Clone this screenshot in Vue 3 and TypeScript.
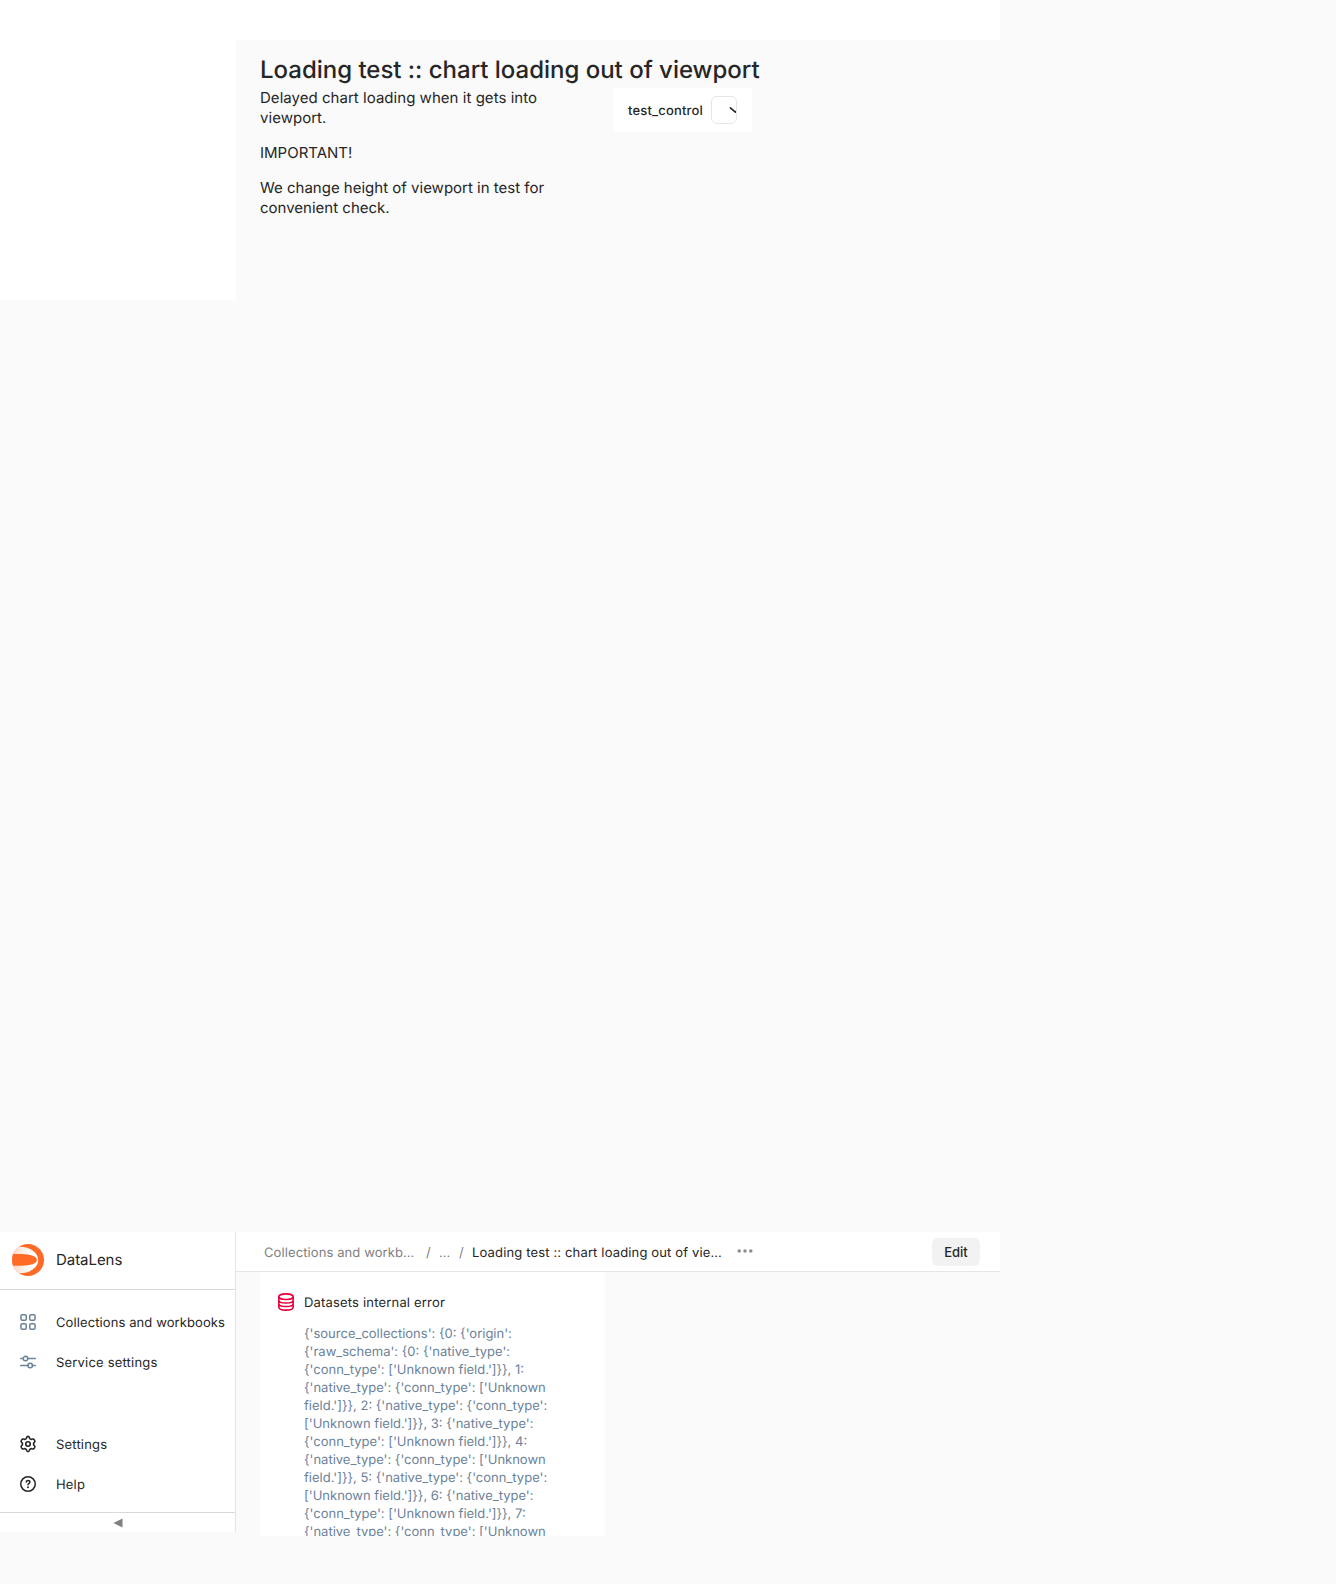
<script setup lang="ts">
const errorLines: string[] = [
  "{'source_collections': {0: {'origin':",
  "{'raw_schema': {0: {'native_type':",
  "{'conn_type': ['Unknown field.']}}, 1:",
  "{'native_type': {'conn_type': ['Unknown",
  "field.']}}, 2: {'native_type': {'conn_type':",
  "['Unknown field.']}}, 3: {'native_type':",
  "{'conn_type': ['Unknown field.']}}, 4:",
  "{'native_type': {'conn_type': ['Unknown",
  "field.']}}, 5: {'native_type': {'conn_type':",
  "['Unknown field.']}}, 6: {'native_type':",
  "{'conn_type': ['Unknown field.']}}, 7:",
  "{'native_type': {'conn_type': ['Unknown",
]
</script>

<template>
  <div class="page">
    <div class="top-strip"></div>
    <div class="upper">
      <div class="aside-blank"></div>
      <div class="dash">
        <h1 class="title">Loading test :: chart loading out of viewport</h1>
        <div class="dash-row">
          <div class="note">
            <p class="lead">Delayed chart loading when it gets into<br />viewport.</p>
            <p>IMPORTANT!</p>
            <p>We change height of viewport in test for<br />convenient check.</p>
          </div>
          <div class="control">
            <span class="control-label">test_control</span>
            <div class="select">
              <svg class="chevron" width="16" height="16" viewBox="0 0 16 16" fill="none" stroke="#262626" stroke-width="1.6" stroke-linecap="round" stroke-linejoin="round"><path d="M3.4 5.8 8.4 10.2l4.7-4.2" /></svg>
            </div>
          </div>
        </div>
      </div>
    </div>

    <div class="shell">
      <aside class="sidebar">
        <div class="brand">
          <svg width="32" height="32" viewBox="0 0 32 32">
            <defs>
              <linearGradient id="lens" x1="0" y1="0" x2="1" y2="0">
                <stop offset="0.3" stop-color="#ffd9c8" />
                <stop offset="0.8" stop-color="#fff" />
              </linearGradient>
              <clipPath id="disc"><circle cx="16" cy="16" r="16" /></clipPath>
            </defs>
            <g clip-path="url(#disc)">
              <rect width="32" height="32" fill="#ff6a26" />
              <ellipse cx="8" cy="16" rx="18.2" ry="13.2" fill="url(#lens)" />
              <path d="M0 10.1H9C19 10.2 24.8 12.4 24.8 16S19 21.6 9 21.7H0Z" fill="#ff6a26" />
            </g>
          </svg>
          <span class="brand-name">DataLens</span>
        </div>
        <nav class="menu">
          <div class="item">
            <svg class="muted" width="16" height="16" viewBox="0 0 16 16"><g fill="none" stroke="currentColor" stroke-width="1.5"><rect x=".95" y=".75" width="5.3" height="5.5" rx="1.25" /><rect x="9.75" y=".75" width="5.3" height="5.5" rx="1.25" /><rect x=".95" y="9.75" width="5.3" height="5.5" rx="1.25" /><rect x="9.75" y="9.75" width="5.3" height="5.5" rx="1.25" /></g></svg>
            <span class="long">Collections and workbooks</span>
          </div>
          <div class="item">
            <svg class="muted" width="16" height="16" viewBox="0 0 16 16"><g fill="none" stroke="currentColor" stroke-width="1.5" stroke-linecap="round"><circle cx="5.5" cy="4.5" r="2.25" /><circle cx="10.2" cy="11.5" r="2.25" /><path d="M.75 4.5h2.5M7.75 4.5h7.5M.75 11.5h7.2M12.5 11.5h2.75" /></g></svg>
            <span>Service settings</span>
          </div>
        </nav>
        <nav class="footer-menu">
          <div class="item">
            <svg width="16" height="16" viewBox="0 0 16 16" overflow="visible"><g fill="none" stroke="currentColor" stroke-width="1.6" stroke-linejoin="round"><path d="M6.55 1.6C6.7 1.05 7 .4 8 .4S9.3 1.05 9.45 1.6L9.7 2.6C10.3 2.9 10.7 3.1 11.2 3.45L12.4 3.1C13.2 2.85 13.9 3.1 14.3 3.8L14.7 4.55C15.1 5.3 14.9 6 14.35 6.5L13.6 7.2V8.8L14.35 9.5C14.9 10 15.1 10.7 14.7 11.45L14.3 12.2C13.9 12.9 13.2 13.15 12.4 12.9L11.2 12.55C10.7 12.9 10.3 13.1 9.7 13.4L9.45 14.4C9.3 14.95 9 15.6 8 15.6S6.7 14.95 6.55 14.4L6.3 13.4C5.7 13.1 5.3 12.9 4.8 12.55L3.6 12.9C2.8 13.15 2.1 12.9 1.7 12.2L1.3 11.45C.9 10.7 1.1 10 1.65 9.5L2.4 8.8V7.2L1.65 6.5C1.1 6 .9 5.3 1.3 4.55L1.7 3.8C2.1 3.1 2.8 2.85 3.6 3.1L4.8 3.45C5.3 3.1 5.7 2.9 6.3 2.6Z" /><circle cx="8" cy="8" r="2.25" /></g></svg>
            <span>Settings</span>
          </div>
          <div class="item">
            <svg width="16" height="16" viewBox="0 0 16 16"><g fill="none" stroke="currentColor" stroke-width="1.5" stroke-linecap="round" stroke-linejoin="round"><circle cx="8" cy="8" r="7.25" /><path d="M6.2 6.1C6.3 5.2 7 4.6 8 4.6c1.1 0 1.9.6 1.9 1.5C9.9 7.4 8 7.4 8 8.8" /></g><circle cx="8" cy="11.2" r=".95" fill="currentColor" /></svg>
            <span>Help</span>
          </div>
        </nav>
        <div class="collapse">
          <svg width="10" height="10" viewBox="0 0 10 10"><path d="M0.4 5 9.5.4v9.2Z" fill="#808080" /></svg>
        </div>
      </aside>

      <main class="main">
        <header class="header">
          <div class="crumbs">
            <span class="crumb first">Collections and workb…</span>
            <span class="crumb sep1">/</span>
            <span class="crumb dots">…</span>
            <span class="crumb sep2">/</span>
            <span class="current">Loading test :: chart loading out of vie…</span>
          </div>
          <svg class="more" width="16" height="16" viewBox="0 0 16 16" fill="#8c8c8c"><circle cx="2.2" cy="8" r="1.75" /><circle cx="8" cy="8" r="1.75" /><circle cx="13.8" cy="8" r="1.75" /></svg>
          <button class="edit">Edit</button>
        </header>
        <section class="card">
          <svg class="db" width="16" height="18" viewBox="0 0 16 18" fill="none" stroke="#e9003a" stroke-width="1.6"><ellipse cx="8" cy="3.7" rx="7.15" ry="2.8" /><path d="M.85 3.7v10.5c0 1.7 3.2 2.9 7.15 2.9s7.15-1.2 7.15-2.9V3.7M.85 7.2c0 1.6 3.2 2.8 7.15 2.8s7.15-1.2 7.15-2.8M.85 10.7c0 1.6 3.2 2.8 7.15 2.8s7.15-1.2 7.15-2.8" /></svg>
          <div class="card-body">
            <div class="card-title">Datasets internal error</div>
            <div class="error">
              <div v-for="(line, i) in errorLines" :key="i">{{ line }}</div>
            </div>
          </div>
        </section>
      </main>
    </div>
  </div>
</template>

<style>
body {
  background: #fafafa;
}
</style>

<style scoped>
.page {
  width: 1336px;
  height: 1584px;
  overflow: hidden;
  box-sizing: border-box;
  background: #fafafa;
  color: #262626;
  font-family: Inter, "Liberation Sans", sans-serif;
  font-size: 13px;
  line-height: 18px;
  text-rendering: geometricPrecision;
  display: flex;
  flex-direction: column;
}
svg {
  display: block;
  flex: none;
}
.top-strip {
  width: 1000px;
  height: 40px;
  flex: none;
  background: #fff;
}
.upper {
  display: flex;
  height: 1192px;
  flex: none;
}
.aside-blank {
  width: 236px;
  height: 260px;
  background: #fff;
}
.dash {
  padding: 16px 24px 0;
  width: 716px;
}
.title {
  margin: 0;
  font-size: 24px;
  line-height: 28px;
  font-weight: 500;
  letter-spacing: -0.015px;
  white-space: nowrap;
}
.dash-row {
  display: flex;
  align-items: flex-start;
  margin-top: 4px;
}
.note {
  width: 353px;
  font-size: 15px;
  line-height: 20px;
  white-space: nowrap;
}
.note p {
  margin: 0 0 15px;
}
.note .lead {
  letter-spacing: 0.035px;
}
.control {
  box-sizing: border-box;
  width: 139px;
  height: 44px;
  border-radius: 3px;
  background: #fff;
  display: flex;
  align-items: center;
  justify-content: space-between;
  padding: 0 15px;
}
.control-label {
  padding-top: 2px;
  font-weight: 500;
  letter-spacing: 0.17px;
}
.select {
  box-sizing: border-box;
  width: 26px;
  height: 28px;
  border: 1px solid #e5e5e5;
  border-radius: 6px;
  overflow: hidden;
  display: flex;
  align-items: center;
  padding-left: 15px;
}
.shell {
  display: flex;
  width: 1000px;
  height: 304px;
  flex: none;
}
.sidebar {
  box-sizing: border-box;
  width: 236px;
  height: 300px;
  background: #fff;
  border-right: 1px solid #e5e5e5;
  display: flex;
  flex-direction: column;
}
.brand {
  box-sizing: border-box;
  height: 58px;
  padding: 0 12px 1px;
  border-bottom: 1px solid #d9d9d9;
  display: flex;
  align-items: center;
  gap: 12px;
  font-size: 15px;
  line-height: 20px;
}
.brand-name {
  letter-spacing: -0.05px;
}
.menu {
  padding-top: 12px;
}
.footer-menu {
  margin-top: auto;
  padding-bottom: 8px;
}
.item {
  height: 40px;
  padding-left: 20px;
  display: flex;
  align-items: center;
  gap: 20px;
  white-space: nowrap;
  letter-spacing: 0.19px;
}
.item span {
  padding-top: 2px;
}
.item .long {
  letter-spacing: 0.1px;
}
.muted {
  color: #6b8299;
}
.collapse {
  height: 19px;
  border-top: 1px solid #d9d9d9;
  display: flex;
  align-items: center;
  justify-content: center;
}
.main {
  width: 764px;
  display: flex;
  flex-direction: column;
}
.header {
  box-sizing: border-box;
  height: 40px;
  flex: none;
  background: #fff;
  border-bottom: 1px solid #e5e5e5;
  padding: 0 20px 0 28px;
  display: flex;
  align-items: center;
}
.crumbs {
  display: flex;
  white-space: nowrap;
  padding-top: 2px;
}
.crumb {
  color: #808080;
}
.first {
  width: 162px;
  letter-spacing: 0.1px;
}
.sep1 {
  width: 13px;
}
.dots {
  width: 20px;
}
.sep2 {
  width: 13px;
}
.current {
  width: 265px;
  letter-spacing: 0.15px;
}
.more {
  position: relative;
  top: -1px;
}
.edit {
  margin-left: auto;
  width: 48px;
  height: 28px;
  border: 0;
  border-radius: 6px;
  background: #f2f2f2;
  color: #262626;
  font: 500 13px/28px Inter, "Liberation Sans", sans-serif;
  padding: 0;
}
.card {
  box-sizing: border-box;
  margin-left: 24px;
  width: 345px;
  height: 264px;
  background: #fff;
  border-radius: 0 0 3px 3px;
  overflow: hidden;
  display: flex;
  align-items: flex-start;
  gap: 10px;
  padding: 21px 18px 0;
}
.card-body {
  padding-top: 1px;
}
.card-title {
  letter-spacing: 0.18px;
}
.error {
  margin-top: 13px;
  color: #6b8299;
  white-space: nowrap;
}
</style>
